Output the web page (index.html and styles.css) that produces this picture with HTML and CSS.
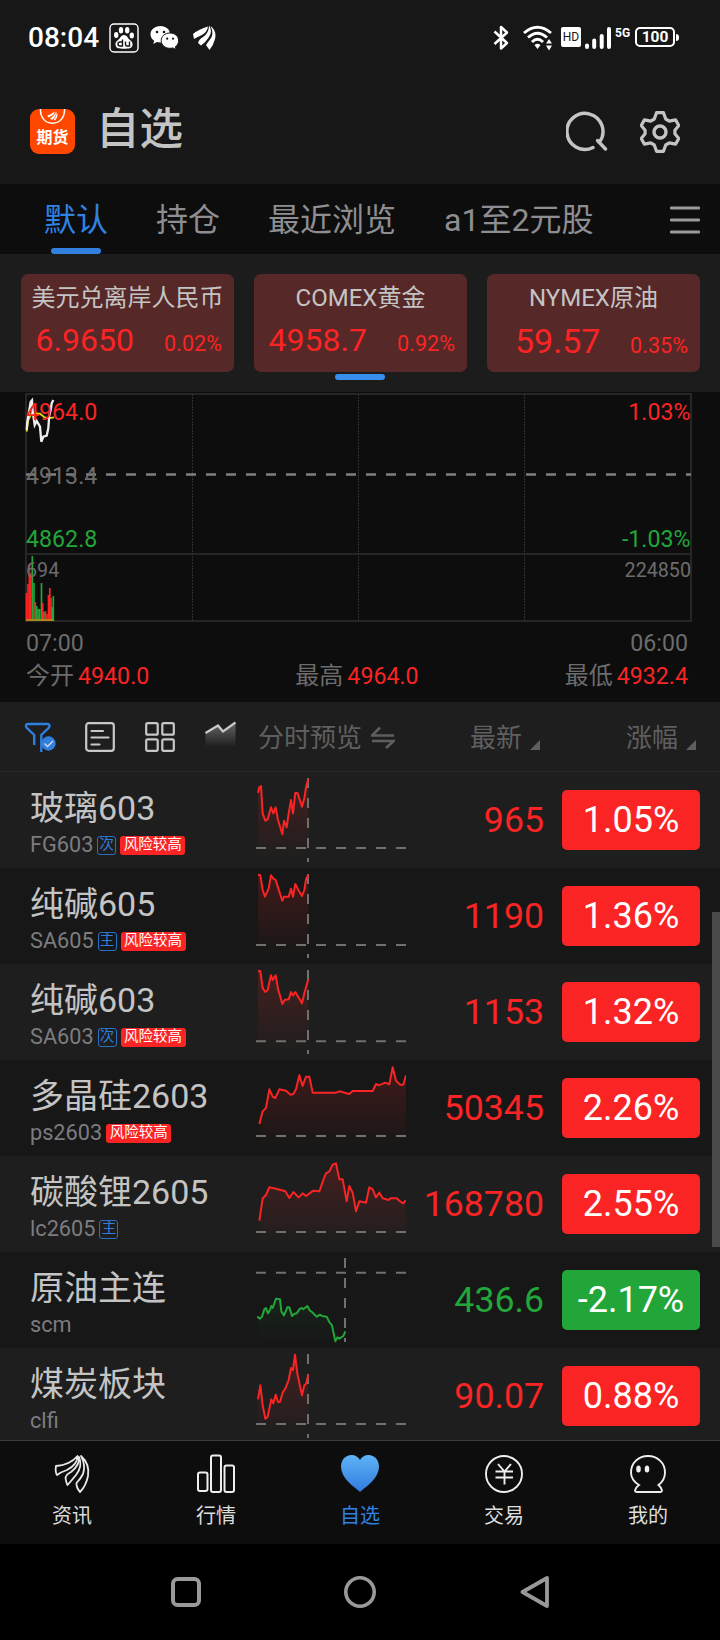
FILE: index.html
```html
<!DOCTYPE html>
<html lang="zh-CN">

<head>
    <meta charset="UTF-8">
    <meta name="viewport" content="width=device-width, initial-scale=1.0">
    <title>自选</title>
    <link rel="stylesheet" href="styles.css">
</head>

<body>
    <div class="phone">
        <div class="status">
            <span class="time">08:04</span>
            <svg class="s-baidu" width="30" height="30" viewBox="0 0 30 30">
                <rect x="1" y="1" width="28" height="28" rx="4" fill="none" stroke="#fff" stroke-width="1.4" />
                <g fill="#fff">
                    <ellipse cx="12" cy="7.3" rx="2.2" ry="3.2" />
                    <ellipse cx="18.2" cy="7.3" rx="2.2" ry="3.2" />
                    <ellipse cx="7.2" cy="12" rx="2.2" ry="3" />
                    <ellipse cx="22.8" cy="12.5" rx="2.2" ry="3" />
                    <path d="M15 12c3 0 3.5 3 6 5 2 1.600 3 3 2.400 5.500-.8 3-3.400 3.200-8.400 3.200s-7.600-.2-8.400-3.200C6 20 7 18.600 9 17c2.500-2 3-5 6-5z" />
                </g>
                <path d="M13.500 16.500v6.500h-2.500q-2 0-2-2t2-2h2.500M16.500 18.500v3q0 1.500 1.500 1.500h2.500v-4.500" fill="none" stroke="#171717" stroke-width="1.400" />
            </svg>
            <svg class="s-wechat" width="29" height="26" viewBox="0 0 29 26">
                <path d="M10.500 1C4.700 1 .5 4.700.5 9.300c0 2.800 1.400 5 3.700 6.500l-.9 3.200 3.600-1.900c1.200.3 2.400.5 3.600.5C16.300 17.600 20 14 20 9.300S16.200 1 10.500 1z" fill="#fff" />
                <path d="M20 8c-5 0-8.800 3.300-8.800 7.700S15 23.300 20 23.300c1 0 2-.1 2.900-.4l3.200 1.800-.8-2.900c2.100-1.400 3.300-3.500 3.300-6.100C28.600 11.300 25 8 20 8z" fill="#fff" stroke="#171717" stroke-width="1" />
                <g fill="#171717">
                    <circle cx="7" cy="7" r="1.300" />
                    <circle cx="14" cy="7" r="1.300" />
                    <circle cx="17.200" cy="13.700" r="1.100" />
                    <circle cx="23" cy="13.700" r="1.100" />
                </g>
            </svg>
            <svg class="s-east" width="23" height="26" viewBox="0 0 23 26">
                <g fill="#fff">
                    <path d="M0 9Q6 4 15 1.500Q14.500 7 8 10.500Q4 12 1 14Z" />
                    <path d="M5 18Q6 14 10 12Q16 8 16 .5Q20 6 16 12Q13 17 8 20.500Z" />
                    <path d="M13 20Q15 17 18 13Q21 8 17.500 1Q24 6 22 14Q20.500 20 16.500 25Z" />
                </g>
            </svg>
            <span class="spacer"></span>
            <svg class="s-bt" width="16" height="26" viewBox="0 0 16 26">
                <path d="M1.500 6.500L14 18L8 23.500V2L14 7.500L1.500 19" fill="none" stroke="#fff" stroke-width="2.500" stroke-linejoin="round" />
            </svg>
            <svg class="s-wifi" width="30" height="26" viewBox="0 0 30 26">
                <g fill="none" stroke="#fff" stroke-width="2.900">
                    <path d="M1 8Q14.500-3.500 28 8M5 12.500Q14.500 4 24 12.500M9 17Q14.500 11.500 20 17" />
                </g>
                <path d="M11.500 20Q14.500 17.500 17.500 20L14.500 24ZM23 18.500L26 14L29 18.500ZM23 20.500H29L26 25.500Z" fill="#fff" />
            </svg>
            <span class="s-hd">HD</span>
            <svg class="s-signal" width="27" height="22" viewBox="0 0 27 22">
                <path d="M2 18.500v1.500M9.200 13.500v6.500M16.700 9v11M24 2v18" fill="none" stroke="#fff" stroke-width="4" stroke-linecap="round" />
            </svg>
            <span class="s-5g">5G</span>
            <span class="s-battery">100</span>
        </div>

        <div class="header">
            <div class="logo">
                <svg width="45" height="45" viewBox="0 0 45 45">
                    <path d="M10.500 0C10 8 15 14.200 22.500 14.200S35 8 34.500 0" fill="none" stroke="#fff" stroke-width="1.400" />
                    <path d="M17.500 6.500Q22 5 24.500 2.500Q25 6 18 8.500ZM20 9.500Q25 6.500 25.500 2.500Q27 7 22 11ZM23.500 10.500Q27 7 26.500 2.500Q29 7 25 11.500Z" fill="#fff" />
                </svg>
                <span>期货</span>
            </div>
            <h1>自选</h1>
            <span class="spacer"></span>
            <svg class="search" width="42" height="42" viewBox="0 0 42 42">
                <path d="M27 36.500A18 18 0 1 1 33.500 31L31.500 29.500L39.500 38" fill="none" stroke="#c4c4c4" stroke-width="3.400" stroke-linecap="round" stroke-linejoin="round" />
            </svg>
            <svg width="40" height="42" viewBox="0 0 40 42">
                <path d="M16.500 1.700h7l2.200 6.300 3.600 2.100 6.300-1.200 3.200 5.600-3.900 4.700v3.600l3.900 4.700-3.200 5.600-6.300-1.200-3.600 2.100-2.200 6.300h-7l-2.200-6.300-3.600-2.100-6.300 1.200-3.200-5.600 3.900-4.700v-3.600l-3.900-4.700 3.200-5.600 6.300 1.200 3.600-2.100z" fill="none" stroke="#c4c4c4" stroke-width="3.200" stroke-linejoin="round" />
                <circle cx="20" cy="21" r="6" fill="none" stroke="#c4c4c4" stroke-width="3.400" />
            </svg>
        </div>

        <div class="tabs">
            <div class="tab tab-active">默认</div>
            <div class="tab">持仓</div>
            <div class="tab">最近浏览</div>
            <div class="tab">a1至2元股</div>
            <svg class="menu" width="30" height="28" viewBox="0 0 30 28">
                <path d="M1 2h28M1 14h28M1 26h28" stroke="#999" stroke-width="2.800" stroke-linecap="round" />
            </svg>
        </div>

        <div class="cards">
            <div class="card">
                <h2>美元兑离岸人民币</h2>
                <p><b>6.9650</b><i>0.02%</i></p>
            </div>
            <div class="card card-active">
                <h2>COMEX黄金</h2>
                <p><b>4958.7</b><i>0.92%</i></p>
            </div>
            <div class="card card-short">
                <h2>NYMEX原油</h2>
                <p><b>59.57</b><i>0.35%</i></p>
            </div>
        </div>

        <div class="chart">
            <svg width="720" height="231" viewBox="0 0 720 231">
                <!-- 網格 -->
                <path d="M26 2H691V229H26ZM26 162H691" fill="none" stroke="#262626" stroke-width="2" />
                <path d="M192.500 2V229M358.500 2V229M524.500 2V229" stroke="#303030" stroke-width="1" stroke-dasharray="2 1" />
                <path d="M26 82.500H691" stroke="#808080" stroke-width="2.400" stroke-dasharray="10 10" />
                <!-- 分時線 -->
                <polyline points="26.700,39.700 28.300,28 31.700,21.300 40,21.700 44,25 48.300,26.300 54,25.300" fill="none" stroke="#e6d800" stroke-width="1.800" />
                <polyline points="26.700,38 27.300,29.700 29.300,18 30.700,9.700 32,8.300 32.700,19.700 34.700,33 36.700,29 40,34.700 41.300,49.700 43.300,44.700 46.700,43.700 48.300,36.300 49.300,23 50.700,18 51.700,11.300 53.300,8" fill="none" stroke="#eee" stroke-width="2.300" />
                <!-- 成交量 -->
                <g class="vol"></g>
                <g class="label">
                    <text x="26" y="27.500" fill="#fa2424">4964.0</text>
                    <text x="26" y="92">4913.4</text>
                    <text x="26" y="155" fill="#22a63a">4862.8</text>
                    <text x="26" y="184.500" class="small">694</text>
                    <text x="690.500" y="27.500" class="end" fill="#fa2424">1.03%</text>
                    <text x="690.500" y="155" class="end" fill="#22a63a">-1.03%</text>
                    <text x="691" y="184.500" class="end small">224850</text>
                </g>
            </svg>
            <div class="hours"><span>07:00</span><span>06:00</span></div>
            <div class="stats">
                <span>今开<em>4940.0</em></span>
                <span>最高<em>4964.0</em></span>
                <span>最低<em>4932.4</em></span>
            </div>
        </div>

        <div class="list-head">
            <svg class="h-filter" width="32" height="32" viewBox="0 0 32 32">
                <path d="M10.200 23V13L2.500 5.500Q.8 2.200 4 2H23.500Q26.600 2.200 25 5.500L17.300 13V30" fill="none" stroke="#2f7fdf" stroke-width="2.400" />
                <circle cx="24.500" cy="21.500" r="7.200" fill="#2f7fdf" />
                <path d="M20.500 21.500l3 3 5.500-5.500" fill="none" stroke="#ddd" stroke-width="1.300" />
            </svg>
            <svg class="h-list" width="30" height="30" viewBox="0 0 30 30">
                <rect x="1.200" y="1.200" width="27.600" height="27.600" rx="2.500" fill="none" stroke="#c8c8c8" stroke-width="2.200" />
                <path d="M6.500 9H18M6.500 15.500H23.500M6.500 22.500H14.500" stroke="#c8c8c8" stroke-width="2.200" stroke-linecap="round" />
            </svg>
            <svg class="h-grid" width="30" height="30" viewBox="0 0 30 30">
                <g fill="none" stroke="#c8c8c8" stroke-width="2.200">
                    <rect x="1.200" y="1.200" width="11.500" height="11.500" rx="1.500" />
                    <rect x="17.300" y="1.200" width="11.500" height="11.500" rx="1.500" />
                    <rect x="1.200" y="17.300" width="11.500" height="11.500" rx="1.500" />
                    <rect x="17.300" y="17.300" width="11.500" height="11.500" rx="1.500" />
                </g>
            </svg>
            <svg class="h-trend" width="31" height="30" viewBox="0 0 31 30">
                <defs>
                    <linearGradient id="trend" x1="0" y1="0" x2="0" y2="1">
                        <stop offset="0" stop-color="#666" />
                        <stop offset="1" stop-color="#666" stop-opacity="0" />
                    </linearGradient>
                </defs>
                <path d="M.5 12L13 4.500L18 10.500L30.500 1.500V26H.5Z" fill="url(#trend)" />
                <path d="M.5 12L13 4.500L18 10.500L30.500 1.500" fill="none" stroke="#c8c8c8" stroke-width="2.300" />
            </svg>
            <span class="preview">分时预览</span>
            <svg class="h-swap" width="24" height="24" viewBox="0 0 24 24">
                <path d="M9 1.500L1 9.500H23M1 15H22.500L15 22" fill="none" stroke="#5f5f5f" stroke-width="2.600" />
            </svg>
            <span class="spacer"></span>
            <span class="sort">最新</span>
            <span class="sort">涨幅</span>
        </div>

        <div class="list"></div>

        <div class="footer">
            <div class="item">
                <svg width="38" height="40" viewBox="0 0 38 40">
                    <path d="M3 12Q17 11 24.500 2Q25 10 14 16Q8 18 4 21Q2 18 3 12ZM12.500 24Q13 20.500 18 18Q27 11 26 3Q30 12 23 21Q19 26 14.500 31Q13 28 12.500 24ZM23.500 29Q28 24 30 20Q33 11 28 2Q37 10 35 22Q33 32 27 38Q23 33 23.500 29Z" fill="none" stroke="#e8e8e8" stroke-width="1.800" stroke-linejoin="round" />
                </svg>
                <span>资讯</span>
            </div>
            <div class="item">
                <svg width="38" height="40" viewBox="0 0 38 40">
                    <g fill="none" stroke="#eee" stroke-width="2">
                        <rect x="1" y="18.500" width="9.500" height="18.500" rx="2" />
                        <rect x="14" y="1.500" width="10" height="36.500" rx="2" />
                        <rect x="27.500" y="11.500" width="9.500" height="26.500" rx="2" />
                    </g>
                </svg>
                <span>行情</span>
            </div>
            <div class="item item-active">
                <svg width="38" height="40" viewBox="0 0 38 40">
                    <defs>
                        <linearGradient id="heart" x1="0" y1="0" x2="0" y2="1">
                            <stop offset="0" stop-color="#5fb3f4" />
                            <stop offset="1" stop-color="#2f7be0" />
                        </linearGradient>
                    </defs>
                    <path d="M19 38C11 31 0 24 0 12.500C0 6 4.500 1 10.500 1C14.500 1 17.500 3 19 6C20.500 3 23.500 1 27.500 1C33.500 1 38 6 38 12.500C38 24 27 31 19 38Z" fill="url(#heart)" />
                </svg>
                <span>自选</span>
            </div>
            <div class="item">
                <svg width="38" height="40" viewBox="0 0 38 40">
                    <circle cx="19" cy="20" r="18" fill="none" stroke="#eee" stroke-width="1.900" />
                    <path d="M13 10l6.500 7.500L26 10M10.500 17.500h17.500M10.500 23.500h17.500M19.500 17.500v13" fill="none" stroke="#eee" stroke-width="1.900" />
                </svg>
                <span>交易</span>
            </div>
            <div class="item">
                <svg width="38" height="40" viewBox="0 0 38 40">
                    <path d="M10 31C5 28 2 23 2 18.500C2 9 9.500 2 19 2S36 9 36 18.500C36 23 33.500 28 29.500 31Q32 33 33 36.500Q33 38 31.500 38H7.500Q6 38 6 36.500Q7 33 10 31Z" fill="none" stroke="#eee" stroke-width="1.900" />
                    <ellipse cx="9.500" cy="15" rx="2.300" ry="3.500" fill="#eee" />
                    <ellipse cx="18" cy="15" rx="2.300" ry="3.500" fill="#eee" />
                </svg>
                <span>我的</span>
            </div>
        </div>

        <div class="nav">
            <svg width="32" height="32" viewBox="0 0 32 32">
                <rect x="3" y="3" width="26" height="26" rx="4.500" fill="none" stroke="#999" stroke-width="4" />
            </svg>
            <svg width="32" height="32" viewBox="0 0 32 32">
                <circle cx="16" cy="16" r="14.200" fill="none" stroke="#999" stroke-width="3.600" />
            </svg>
            <svg width="32" height="32" viewBox="0 0 32 32">
                <path d="M4.500 16L29 2V30Z" fill="none" stroke="#999" stroke-width="3.800" stroke-linejoin="round" />
            </svg>
        </div>
    </div>

    <script>
        // 自選列表 base: 昨收虛線, now: 目前時間虛線
        const dataList = [
            { name: '玻璃603', code: 'FG603', tag: '次', risk: true, price: '965', rate: '1.05%', base: 228, now: 156, points: '6,62 10,46 15,42 20,124 28,146 35,142 45,106 52,124 59,106 66,144 79,187 84,146 92,166 98,124 105,84 111,124 118,62 125,64 138,104 145,79 150,46 157,20' },
            { name: '纯碱605', code: 'SA605', tag: '主', risk: true, price: '1190', rate: '1.36%', base: 231, now: 156, points: '6,20 13,22 20,66 27,86 38,62 45,22 52,32 59,36 66,58 79,98 84,86 98,86 105,62 111,86 118,48 125,62 138,84 145,66 150,34 157,20' },
            { name: '纯碱603', code: 'SA603', tag: '次', risk: true, price: '1153', rate: '1.32%', base: 232, now: 156, points: '6,20 13,22 20,72 28,84 35,78 45,34 50,48 59,34 66,74 79,120 86,108 98,106 105,84 111,94 118,84 138,118 145,88 157,46' },
            { name: '多晶硅2603', code: 'ps2603', risk: true, price: '50345', rate: '2.26%', base: 228, points: '10,192 20,154 30,144 40,88 50,110 58,114 70,88 90,92 104,104 112,102 120,88 130,46 140,78 150,50 160,50 170,98 240,98 250,94 280,102 290,93 350,93 360,72 368,76 388,68 400,73 410,22 420,62 432,74 442,74 450,46' },
            { name: '碳酸锂2605', code: 'lc2605', tag: '主', price: '168780', rate: '2.55%', base: 228, points: '10,194 20,127 30,117 40,94 60,98 88,106 100,126 112,108 128,124 140,112 150,120 172,104 190,106 202,72 210,52 220,46 230,26 240,22 250,70 260,70 272,136 280,90 290,110 300,166 310,136 330,140 340,94 350,100 360,124 370,110 380,127 398,132 404,127 422,127 432,136 442,142 450,132' },
            { name: '原油主连', code: 'scm', price: '436.6', rate: '-2.17%', down: true, base: 62, now: 267, points: '4,194 12,200 18,194 25,172 30,168 36,184 42,174 46,162 50,168 60,140 72,142 76,178 84,190 94,166 100,166 108,192 114,186 122,184 132,170 138,168 142,172 154,162 162,176 168,180 182,194 192,188 198,192 212,194 220,210 228,220 238,268 244,256 250,260 262,252 268,238' },
            { name: '煤炭板块', code: 'clfi', price: '90.07', rate: '0.88%', base: 228, now: 156, points: '6,154 13,112 20,172 28,212 35,206 46,154 52,166 59,140 66,162 72,162 80,134 88,122 98,96 105,60 111,66 117,20 124,76 138,142 145,112 150,108 157,80' },
        ];

        const list = document.querySelector('.list');
        dataList.forEach((el, index) => {
            const color = el.down ? '#22a63a' : '#fa2424';
            const pts = el.points.split(' ');
            const startX = pts[0].split(',')[0];
            const endX = pts[pts.length - 1].split(',')[0];
            list.innerHTML += `
                <div class="row ${el.down ? 'down' : ''}">
                    <div class="name">
                        <p>${el.name}</p>
                        <div class="code">
                            <span>${el.code}</span>
                            ${el.tag ? `<span class="tag">${el.tag}</span>` : ''}
                            ${el.risk ? '<span class="risk">风险较高</span>' : ''}
                        </div>
                    </div>
                    <svg width="150" height="96" viewBox="0 0 450 288">
                        <defs>
                            <linearGradient id="g${index}" gradientUnits="userSpaceOnUse" x1="0" y1="20" x2="0" y2="270">
                                <stop offset="0" stop-color="${color}" stop-opacity="0.18" />
                                <stop offset="1" stop-color="${color}" stop-opacity="0" />
                            </linearGradient>
                        </defs>
                        <polygon points="${startX},270 ${el.points} ${endX},270" fill="url(#g${index})" />
                        <path d="M0 ${el.base}H450" stroke="#707070" stroke-width="6" stroke-dasharray="30 30" />
                        ${el.now ? `<path d="M${el.now} 18V270" stroke="#707070" stroke-width="6" stroke-dasharray="30 30" />` : ''}
                        <polyline points="${el.points}" fill="none" stroke="${color}" stroke-width="6" stroke-linejoin="round" />
                    </svg>
                    <div class="price">${el.price}</div>
                    <div class="rate">${el.rate}</div>
                </div>`;
        });

        // 成交量 [x, y, 漲跌]
        const vol = [[26.5, 201, 1], [28, 192, 1], [29.300, 172, 1], [30.700, 181, 1], [32.300, 164, 0], [34, 191, 0], [35.300, 210, 1], [36.700, 214, 0], [38, 217, 0], [39.700, 217, 0], [41.500, 191, 0], [42.700, 211, 1], [44, 220, 0], [45.500, 219, 1], [47, 222, 1], [48.500, 203, 1], [49.800, 196, 1], [51, 206, 1], [52.200, 215, 0], [53.300, 204, 0]];
        document.querySelector('.vol').innerHTML = vol.map(v =>
            `<path d="M${v[0]} ${v[1]}V229" stroke="${v[2] ? '#fa2424' : '#22a63a'}" stroke-width="1.700" />`
        ).join('') + '<path d="M26 228H54" stroke="#b5901c" stroke-width="1.600" />';
    </script>
</body>

</html>
```
FILE: styles.css
```css
* {
    margin: 0;
    padding: 0;
    box-sizing: border-box;
}

body {
    background-color: #000;
    font-family: Roboto, "Noto Sans CJK SC", sans-serif;
    color: #c4c4c4;
}

svg {
    display: block;
    flex-shrink: 0;
}

.phone {
    width: 720px;
    height: 1640px;
    overflow: hidden;
    display: flex;
    flex-direction: column;
}

.spacer {
    flex: 1;
}

/* 狀態列 */
.status {
    height: 75px;
    padding: 0 45px 0 28px;
    background-color: #171717;
    color: #fff;
    display: flex;
    align-items: center;
}

.time {
    width: 81px;
    font-size: 28px;
    font-weight: 500;
    line-height: 32px;
    padding-top: 1px;
}

.s-wechat {
    margin-left: 11px;
}

.s-east {
    margin-left: 14px;
}

.s-bt {
    margin-right: 14px;
}

.s-wifi {
    margin-right: 8px;
}

.s-hd {
    width: 20px;
    height: 20px;
    line-height: 20px;
    border-radius: 2px;
    background-color: #fff;
    color: #171717;
    font-size: 12px;
    text-align: center;
    margin: -1px 4px 0 0;
}

.s-5g {
    width: 15px;
    height: 22px;
    margin: 0 5px 0 3px;
    font-size: 12px;
    font-weight: 700;
    line-height: 12px;
}

.s-battery {
    width: 40px;
    height: 20px;
    margin-top: -1px;
    border: 2px solid #fff;
    border-radius: 5px;
    font-size: 15.5px;
    font-weight: 700;
    line-height: 17px;
    text-align: center;
    position: relative;
}

.s-battery::after {
    content: '';
    width: 3px;
    height: 7px;
    border-radius: 0 3px 3px 0;
    background-color: #fff;
    position: absolute;
    top: 5px;
    right: -6px;
}

/* 標題 */
.header {
    height: 109px;
    padding: 5px 40px 0 30px;
    background-color: #171717;
    display: flex;
    align-items: center;
}

.logo {
    width: 45px;
    height: 45px;
    margin-bottom: 1px;
    border-radius: 9px;
    background-color: #ff4700;
    position: relative;
}

.logo span {
    width: 45px;
    position: absolute;
    top: 20px;
    left: 0;
    color: #fff;
    font-size: 16px;
    font-weight: 700;
    line-height: 18px;
    text-align: center;
}

.header h1 {
    margin: 0 0 5px 21px;
    font-size: 43.5px;
    font-weight: 500;
    line-height: 50px;
}

.search {
    margin-right: 32px;
}

/* 頁籤 */
.tabs {
    height: 70px;
    padding-left: 44px;
    background-color: #0d0d0d;
    color: #8e8e92;
    font-size: 32px;
    line-height: 73px;
    display: flex;
}

.tab {
    margin-right: 48px;
    position: relative;
    white-space: nowrap;
}

.tab-active {
    color: #2f82e4;
}

.tab-active::after,
.card-active::after {
    content: '';
    width: 50px;
    height: 6px;
    border-radius: 3px;
    background-color: #3180e0;
    position: absolute;
    left: 7px;
    bottom: 0;
}

.menu {
    margin: 22px 20px 0 auto;
}

/* 行情卡片 */
.cards {
    height: 138px;
    padding: 20px 20px 0 21px;
    background-color: #1c1c1c;
    display: flex;
    gap: 20px;
}

.card {
    width: 213px;
    height: 98px;
    border-radius: 7px;
    background-color: #572828;
    position: relative;
}

.card-active::after {
    background-color: #378eec;
    left: 81px;
    bottom: -8px;
}

.card h2 {
    padding-top: 7px;
    font-size: 24px;
    font-weight: 400;
    line-height: 34px;
    text-align: center;
}

.card p {
    padding: 6px 12px 0 14.5px;
    color: #fa2424;
    line-height: 38px;
    display: flex;
    justify-content: space-between;
    align-items: baseline;
}

.card b {
    font-size: 32px;
    font-weight: 400;
}

.card i {
    font-size: 21.6px;
    font-style: normal;
}

.card-short p {
    padding: 7px 12px 0 28px;
}

.card-short b {
    font-size: 34px;
}

/* 走勢圖 */
.chart {
    height: 310px;
    background-color: #0d0d0d;
    color: #6c6c6c;
    font-size: 24px;
}

.label text {
    font-size: 23.2px;
}

.label text:not([fill]) {
    fill: #6c6c6c;
}

.label .small {
    font-size: 19.7px;
}

.label .end {
    text-anchor: end;
}

.hours,
.stats {
    padding: 4px 32px 0 26px;
    line-height: 32px;
    display: flex;
    justify-content: space-between;
}

.hours {
    font-size: 23.2px;
}

.stats {
    padding-top: 1px;
}

.stats em {
    margin-left: 4px;
    color: #fa2424;
    font-size: 23.2px;
    font-style: normal;
}

/* 列表標題 */
.list-head {
    height: 70px;
    padding: 0 24px 2px 24px;
    background-color: #1e1e1e;
    border-bottom: 1px solid #262626;
    color: #5f5f5f;
    font-size: 26px;
    display: flex;
    align-items: center;
}

.h-filter {
    margin-top: 4px;
}

.h-list {
    margin: 3px 0 0 29px;
}

.h-grid {
    margin: 3px 0 0 30px;
}

.h-trend {
    margin: 0 0 0 30px;
}

.preview {
    margin-left: 22px;
}

.h-swap {
    margin: 4px 0 0 9px;
}

.sort {
    display: flex;
    align-items: center;
}

.sort::after {
    content: '';
    margin: 18px 0 0 8px;
    border-left: 10px solid transparent;
    border-bottom: 10px solid #5f5f5f;
}

.sort + .sort {
    margin-left: 86px;
}

/* 自選列表 */
.list {
    height: 668px;
    overflow: hidden;
    position: relative;
}

.list::after {
    content: '';
    width: 8px;
    height: 335px;
    background-color: #4a4a4a;
    position: absolute;
    top: 140px;
    right: 0;
}

.row {
    height: 96px;
    padding: 0 20px 0 30px;
    background-color: #1e1e1e;
    display: flex;
}

.row:nth-child(even) {
    background-color: #171717;
}

.name {
    width: 226px;
    padding-top: 13px;
}

.name p {
    font-size: 34px;
    line-height: 46px;
}

.code {
    height: 28px;
    color: #7c7c80;
    font-size: 21.7px;
    line-height: 28px;
    display: flex;
    align-items: center;
    gap: 4px;
}

.tag,
.risk {
    height: 19px;
    border-radius: 3px;
    font-size: 14.5px;
    line-height: 18px;
    text-align: center;
    margin-top: 1px;
}

.tag {
    width: 19px;
    border: 1px solid #2a6fc4;
    color: #2f7fdf;
    line-height: 16px;
}

.risk {
    width: 65px;
    background-color: #fa2424;
    color: #fff;
}

.price {
    width: 138px;
    color: #fa2424;
    font-size: 35.7px;
    line-height: 96px;
    text-align: right;
}

.rate {
    width: 138px;
    height: 60px;
    margin: 18px 0 0 auto;
    border-radius: 5px;
    background-color: #fa2424;
    color: #fff;
    font-size: 36px;
    line-height: 60px;
    text-align: center;
}

.down .price {
    color: #22a63a;
}

.down .rate {
    background-color: #22a63a;
}

/* 底部選單 */
.footer {
    height: 104px;
    border-top: 1px solid #3a3a3a;
    background-color: #0d0d0d;
    color: #ddd;
    font-size: 20px;
    display: flex;
}

.item {
    flex: 1;
    padding-top: 13px;
    line-height: 30px;
    display: flex;
    flex-direction: column;
    align-items: center;
}

.item span {
    padding-top: 7px;
}

.item-active {
    color: #2f82e4;
}

.nav {
    height: 96px;
    background-color: #000;
    display: flex;
    justify-content: center;
    align-items: center;
    gap: 142px;
}
```
